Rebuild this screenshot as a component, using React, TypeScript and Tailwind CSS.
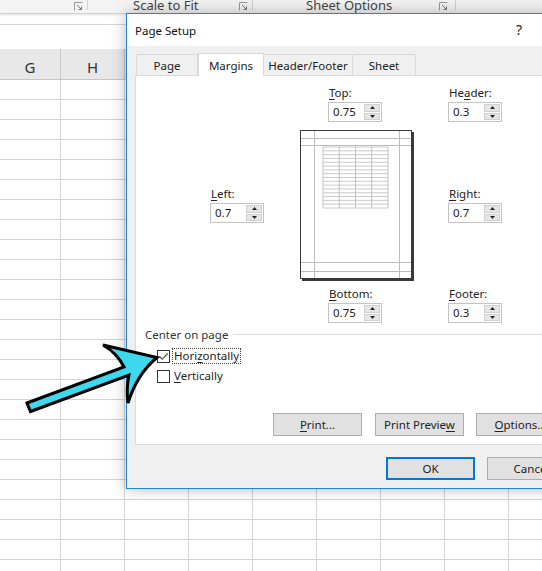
import React from "react";

const FONT = '"Noto Sans", "Segoe UI", "Liberation Sans", sans-serif';

const COLS = [61, 64, 64, 64, 64, 64, 64, 64, 64];

function Launcher() {
  return (
    <svg width="9" height="9" viewBox="0 0 9 9" className="block">
      <path d="M0.5 8.5 V0.5 H8.5" fill="none" stroke="#9a9a9a" strokeWidth="1" />
      <path d="M3 3 L7.5 7.5 M4.5 7.5 H7.5 V4.5" fill="none" stroke="#777" strokeWidth="1" />
    </svg>
  );
}

function Lbl({ pre, u, post }: { pre?: string; u: string; post: string }) {
  return (
    <span>
      {pre}
      <span className="underline underline-offset-[2px] decoration-[1px]">{u}</span>
      {post}
    </span>
  );
}

function Spin({ value }: { value: string }) {
  return (
    <div className="mt-[2px] flex h-[20px] w-[54px] border border-[#c4c4c4] bg-white">
      <div className="flex-1 pl-[4px] text-[11.5px] leading-[18px] text-[#222]">{value}</div>
      <div className="flex w-[17px] flex-col gap-[1px] py-[1px] pr-[1px]">
        <div className="flex flex-1 items-center justify-center border border-[#d0d0d0] bg-[#e5e5e5]">
          <svg width="5" height="3" viewBox="0 0 5 3">
            <path d="M2.5 0 L5 3 H0 Z" fill="#222" />
          </svg>
        </div>
        <div className="flex flex-1 items-center justify-center border border-[#d0d0d0] bg-[#e5e5e5]">
          <svg width="5" height="3" viewBox="0 0 5 3">
            <path d="M0 0 H5 L2.5 3 Z" fill="#222" />
          </svg>
        </div>
      </div>
    </div>
  );
}

function Field({ pre, u, post, value }: { pre?: string; u: string; post: string; value: string }) {
  return (
    <div className="flex w-[54px] flex-col">
      <div className="h-[14px] whitespace-nowrap pl-[1px] text-[11.5px] leading-[14px] text-[#222]">
        <Lbl pre={pre} u={u} post={post} />
      </div>
      <Spin value={value} />
    </div>
  );
}

function Preview() {
  const rows = [];
  for (let i = 0; i <= 16; i++) {
    const y = 17 + (61 * i) / 16;
    rows.push(<line key={"r" + i} x1="23" x2="88" y1={y} y2={y} stroke="#c4c4c4" strokeWidth="0.9" />);
  }
  const cols = [23, 39.25, 55.5, 71.75, 88].map((x, i) => (
    <line key={"c" + i} x1={x} x2={x} y1="17" y2="78" stroke="#c0c0c0" strokeWidth="1" />
  ));
  return (
    <svg width="114" height="151" viewBox="0 0 114 151" className="block">
      <rect x="2" y="2" width="112" height="149" fill="#3a3a3a" />
      <rect x="0.5" y="0.5" width="111" height="148" fill="#fff" stroke="#3a3a3a" strokeWidth="1" />
      <line x1="1" x2="111" y1="8.5" y2="8.5" stroke="#bdbdbd" />
      <line x1="1" x2="111" y1="15.5" y2="15.5" stroke="#bdbdbd" />
      <line x1="1" x2="111" y1="132.5" y2="132.5" stroke="#bdbdbd" />
      <line x1="1" x2="111" y1="141.5" y2="141.5" stroke="#bdbdbd" />
      <line x1="14.5" x2="14.5" y1="1" y2="148" stroke="#bdbdbd" />
      <line x1="99.5" x2="99.5" y1="1" y2="148" stroke="#bdbdbd" />
      {rows}
      {cols}
    </svg>
  );
}

function Check({ checked }: { checked?: boolean }) {
  return (
    <div className="flex h-[13px] w-[13px] items-center justify-center border border-[#333] bg-white">
      {checked && (
        <svg width="11" height="11" viewBox="0 0 11 11">
          <path d="M1.5 5.5 L4.2 8.2 L9.7 2.5" fill="none" stroke="#555" strokeWidth="1.2" />
        </svg>
      )}
    </div>
  );
}

function Btn({ children, w = 89, primary }: { children: React.ReactNode; w?: number; primary?: boolean }) {
  return (
    <div
      className={
        "flex h-[23px] shrink-0 items-center justify-center whitespace-nowrap bg-[#e1e1e1] text-[11.5px] text-[#222] " +
        (primary
          ? "border border-[#0078d7] shadow-[inset_0_0_0_1px_#0078d7]"
          : "border border-[#adadad]")
      }
      style={{ width: w }}
    >
      {children}
    </div>
  );
}

export default function App() {
  return (
    <div className="relative h-[571px] w-[542px] overflow-hidden bg-white" style={{ fontFamily: FONT }}>
      {/* Ribbon */}
      <div className="relative z-[1] flex h-[14px] border-b border-[#d4d4d4] bg-[#f3f3f3] shadow-[0_1px_2px_rgba(0,0,0,0.12)]">
        <div className="flex w-[87px] justify-end pr-[4px] pt-[2px]">
          <Launcher />
        </div>
        <div className="h-[10px] w-px bg-[#d0d0d0]" />
        <div className="flex w-[164px] items-start">
          <span className="ml-[45px] -mt-[3px] whitespace-nowrap text-[13px] leading-[16px] text-[#444]">Scale to Fit</span>
          <div className="ml-auto mr-[4px] pt-[2px]">
            <Launcher />
          </div>
        </div>
        <div className="h-[10px] w-px bg-[#d0d0d0]" />
        <div className="flex w-[202px] items-start">
          <span className="ml-[53px] -mt-[3px] whitespace-nowrap text-[13px] leading-[16px] text-[#444]">Sheet Options</span>
          <div className="ml-auto mr-[7px] pt-[2px]">
            <Launcher />
          </div>
        </div>
        <div className="h-[10px] w-px bg-[#d0d0d0]" />
      </div>

      {/* Formula bar area */}
      <div className="h-[11px] border-b border-[#d6d6d6] bg-white" />
      <div className="h-[24px] bg-white" />

      {/* Column headers */}
      <div className="flex h-[31px] border-b border-[#c6c6c6] bg-[#e8e8e8]">
        {COLS.map((w, i) => (
          <div
            key={i}
            className="flex shrink-0 items-end justify-center border-r border-[#c8c8c8] pb-[2px] text-[15px] leading-[20px] text-[#333]"
            style={{ width: w }}
          >
            {i === 0 ? "G" : i === 1 ? "H" : ""}
          </div>
        ))}
      </div>

      {/* Grid rows */}
      {Array.from({ length: 25 }).map((_, r) => (
        <div key={r} className="flex h-[20px]">
          {COLS.map((w, i) => (
            <div key={i} className="shrink-0 border-b border-r border-[#d4d4d4]" style={{ width: w }} />
          ))}
        </div>
      ))}

      {/* Dialog */}
      <div className="absolute left-[126px] top-[13px] z-10 flex h-[476px] w-[470px] flex-col border border-[#2386d9] bg-[#f0f0f0] shadow-[0_0_14px_rgba(0,0,0,0.28)]">
        <div className="flex h-[32px] items-center bg-white pl-[8px] pt-[2px]">
          <span className="text-[11.5px] text-[#111]">Page Setup</span>
          <span className="ml-[320px] -mt-[3px] text-[14px] text-[#222]">?</span>
        </div>
        <div className="flex flex-1 flex-col px-[8px] pt-[8px]">
          {/* Tabs */}
          <div className="flex h-[21px] items-end pl-[1px]">
            <div className="flex h-[21px] w-[62px] items-center justify-center border border-b-0 border-[#d9d9d9] bg-[#f0f0f0] pt-[2px] text-[11.5px] text-[#222]">
              Page
            </div>
            <div className="relative z-10 -mb-[1px] flex h-[23px] w-[66px] items-center justify-center border border-b-0 border-[#d9d9d9] bg-white pt-[1px] text-[11.5px] text-[#222]">
              Margins
            </div>
            <div className="flex h-[21px] w-[89px] items-center justify-center border border-b-0 border-l-0 border-[#d9d9d9] bg-[#f0f0f0] pt-[2px] text-[11.5px] text-[#222]">
              Header/Footer
            </div>
            <div className="flex h-[21px] w-[63px] items-center justify-center border border-b-0 border-l-0 border-[#d9d9d9] bg-[#f0f0f0] pt-[2px] text-[11.5px] text-[#222]">
              Sheet
            </div>
          </div>
          {/* Panel */}
          <div className="flex h-[370px] flex-col border border-[#d9d9d9] bg-white pt-[10px]">
            <div className="flex pl-[192px]">
              <Field u="T" post="op:" value="0.75" />
              <div className="ml-[66px]">
                <Field pre="He" u="a" post="der:" value="0.3" />
              </div>
            </div>
            <div className="mt-[8px] flex h-[149px] items-center pl-[74px]">
              <div className="pt-[1px]">
                <Field u="L" post="eft:" value="0.7" />
              </div>
              <div className="ml-[36px] self-start">
                <Preview />
              </div>
              <div className="ml-[34px] pt-[1px]">
                <Field u="R" post="ight:" value="0.7" />
              </div>
            </div>
            <div className="mt-[8px] flex pl-[192px]">
              <Field u="B" post="ottom:" value="0.75" />
              <div className="ml-[66px]">
                <Field u="F" post="ooter:" value="0.3" />
              </div>
            </div>
            <div className="mt-[5px] flex h-[14px] items-center pl-[9px]">
              <span className="text-[11.5px] leading-[14px] text-[#333]">Center on page</span>
              <div className="ml-[5px] -mt-[2px] h-px flex-1 bg-[#dcdcdc]" />
            </div>
            <div className="mt-[6px] flex h-[16px] items-center pl-[21px]">
              <Check checked />
              <span className="ml-[2px] border border-dotted border-[#444] px-[1px] text-[11.5px] leading-[14px] text-[#222]">
                <Lbl pre="Hori" u="z" post="ontally" />
              </span>
            </div>
            <div className="mt-[4px] flex h-[16px] items-center pl-[21px]">
              <Check />
              <span className="ml-[3px] px-[1px] text-[11.5px] leading-[14px] text-[#222]">
                <Lbl u="V" post="ertically" />
              </span>
            </div>
            <div className="mt-[29px] flex pl-[137px]">
              <Btn>
                <Lbl u="P" post="rint..." />
              </Btn>
              <div className="ml-[13px]">
                <Btn>
                  <Lbl pre="Print Previe" u="w" post="" />
                </Btn>
              </div>
              <div className="ml-[12px]">
                <Btn>
                  <Lbl u="O" post="ptions..." />
                </Btn>
              </div>
            </div>
          </div>
          {/* Footer */}
          <div className="mt-[12px] flex pl-[251px]">
            <Btn primary>OK</Btn>
            <div className="ml-[12px]">
              <Btn>Cancel</Btn>
            </div>
          </div>
        </div>
      </div>

      {/* Annotation arrow */}
      <svg
        className="pointer-events-none absolute left-[18px] top-[336px] z-20"
        width="148"
        height="86"
        viewBox="18 336 148 86"
      >
        <path
          d="M27 403 L124 367 Q117 353 103 345 L157 357.5 Q137 374 128 403 Q126 389 129 375 L30.5 411.5 Z"
          fill="#3dd8ee"
          stroke="#000"
          strokeWidth="3"
          strokeLinejoin="miter"
        />
      </svg>
    </div>
  );
}
